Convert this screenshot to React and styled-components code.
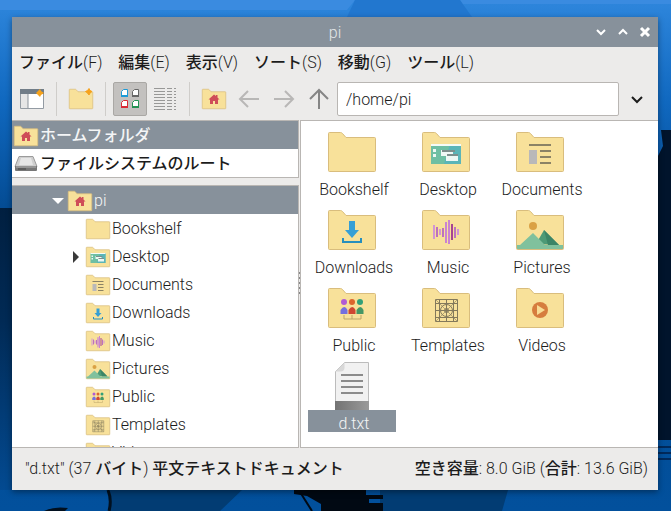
import React from "react";
import styled, { createGlobalStyle } from "styled-components";

const GlobalStyle = createGlobalStyle`
  * {
    box-sizing: border-box;
  }
  body {
    margin: 0;
    font-family: Roboto, "Noto Sans CJK JP", sans-serif;
    font-size: 16px;
    font-weight: 300;
    line-height: 20px;
    color: #1c1c1c;
  }
  button, input {
    font: inherit;
    color: inherit;
  }
`;

const Desktop = styled.div`
  position: relative;
  height: 100vh;
  padding: 17px 13px 21px 12px;
  display: flex;
  overflow: hidden;
  background-color: #034a91;
`;

const Wallpaper = styled.svg`
  position: absolute;
  inset: 0;
  width: 100%;
  height: 100%;
`;

const Window = styled.main`
  position: relative;
  flex: 1;
  min-width: 0;
  display: flex;
  flex-direction: column;
  background-color: #ecebea;
  box-shadow: 0 2px 6px rgba(0, 0, 0, 0.4);
`;

const TitleBar = styled.header`
  position: relative;
  height: 30px;
  flex-shrink: 0;
  display: flex;
  align-items: center;
  justify-content: flex-end;
  padding-right: 2px;
  color: white;
  background-color: #87919b;
`;

const Title = styled.h1`
  position: absolute;
  inset: 0;
  margin: 0;
  font-size: 16px;
  font-weight: 300;
  line-height: 32px;
  text-align: center;
  color: #e3e6e8;
`;

const TitleButton = styled.button`
  position: relative;
  width: 22px;
  height: 22px;
  padding: 0;
  border: 0;
  display: grid;
  place-items: center;
  color: white;
  background: none;
`;

const MenuBar = styled.nav`
  height: 32px;
  flex-shrink: 0;
  display: flex;
  align-items: center;
  gap: 16px;
  padding: 0 7px;
`;

const MenuItem = styled.button`
  padding: 0;
  border: 0;
  background: none;
  white-space: nowrap;
`;

const Ja = styled.span`
  font-weight: 500;
`;

const ToolBar = styled.div`
  height: 41px;
  flex-shrink: 0;
  display: flex;
  align-items: center;
  gap: 1px;
  padding: 0 4px 1px 3px;
`;

const ToolButton = styled.button`
  width: 34px;
  height: 34px;
  flex-shrink: 0;
  padding: 0;
  border: 1px solid ${(props) => (props.$active ? "#aaa8a5" : "transparent")};
  border-radius: 2px;
  display: grid;
  place-items: center;
  background-color: ${(props) => (props.$active ? "#c3c1bf" : "transparent")};
`;

const Separator = styled.div`
  width: 1px;
  height: 34px;
  margin: 0 6px;
  background-color: #cfcdca;
`;

const PathInput = styled.input`
  flex: 1;
  min-width: 0;
  height: 34px;
  padding: 0 8px;
  border: 1px solid #b9b6b3;
  border-radius: 2px;
  background-color: white;
`;

const Panes = styled.div`
  flex: 1;
  min-height: 0;
  display: flex;
`;

const SidePane = styled.aside`
  width: 287px;
  flex-shrink: 0;
  display: flex;
  flex-direction: column;
  gap: 7px;
`;

const List = styled.ul`
  flex: ${(props) => (props.$fill ? "1" : "none")};
  min-height: 0;
  margin: 0;
  padding: 0;
  list-style: none;
  overflow: hidden;
  border: 1px solid #b9b6b3;
  border-left: 0;
  background-color: white;
`;

const Row = styled.li`
  height: 28px;
  display: flex;
  align-items: center;
  gap: 2px;
  padding: 2px 0 0 ${(props) => props.$indent}px;
  color: ${(props) => (props.$selected ? "#f4f5f6" : "inherit")};
  background-color: ${(props) => (props.$selected ? "#87919b" : "white")};
`;

const Arrow = styled.svg`
  width: 16px;
  height: 16px;
`;

const Splitter = styled.div`
  width: 1px;
  display: flex;
  background: repeating-linear-gradient(#888 0 2px, #ecebea 2px 5px) center / 1px 24px no-repeat;
`;

const FileGrid = styled.ul`
  flex: 1;
  min-width: 0;
  margin: 0;
  padding: 7px;
  list-style: none;
  display: grid;
  grid-template-columns: repeat(auto-fill, 88px);
  grid-auto-rows: 70px;
  gap: 8px 6px;
  border: 1px solid #b9b6b3;
  border-right: 0;
  background-color: white;
`;

const File = styled.li`
  display: flex;
  flex-direction: column;
  align-items: center;
`;

const FileName = styled.span`
  align-self: stretch;
  height: 22px;
  padding: 4px 0 0 4px;
  text-align: center;
  color: ${(props) => (props.$selected ? "#f4f5f6" : "inherit")};
  background-color: ${(props) => (props.$selected ? "#87919b" : "transparent")};
`;

const StatusBar = styled.footer`
  height: 42px;
  flex-shrink: 0;
  display: flex;
  align-items: center;
  justify-content: space-between;
  padding: 0 10px 0 13px;
  white-space: nowrap;
`;

const emblems = {
  home: (
    <path d="M24 15l-11 10h3v9h6v-6h4v6h6v-9h3l-4-4v-5h-3v2z" fill="#cf4d58" />
  ),
  desktop: (
    <>
      <path d="M9 16h30v20H9z" fill="#6fbfa3" />
      <path d="M28 16h11v20H22z" fill="#5bb5b8" />
      <path d="M9 16h30v2H9z" fill="#f5fbf8" />
      <path d="M11 21h3v3h-3zM11 26h3v3h-3zM19 22h12v6H19zM24 26h12v7H24z" fill="#eef8f4" />
      <path d="M20 22h13v2H20zM25 26h11v2H25z" fill="#7d8f8c" />
    </>
  ),
  documents: (
    <>
      <path d="M13 17h22M24 23h11M24 29h11M24 35h11" stroke="#8b8265" strokeWidth="2" />
      <path d="M13 22h8v14h-8z" fill="#b9b8b9" />
    </>
  ),
  downloads: (
    <>
      <path d="M21 15h6v9h4l-7 8-7-8h4z" fill="#369fd5" />
      <path d="M15 32v4h18v-4" fill="none" stroke="#278fbd" strokeWidth="2" />
    </>
  ),
  music: (
    <>
      <path
        d="M12 19v14M18 23v6M24 19v14M36 23v6"
        stroke="#d296d4"
        strokeWidth="2"
      />
      <path d="M15 21v10M21 22v9M33 21v11" stroke="#bd72bd" strokeWidth="2" />
      <path d="M24 16v21M27 14v24" stroke="#c983d2" strokeWidth="2" />
      <path d="M30 18v16" stroke="#a74591" strokeWidth="2" />
    </>
  ),
  pictures: (
    <>
      <circle cx="17" cy="20" r="4" fill="#daa144" />
      <path d="M20 38l8-14 15 15z" fill="#4d9a76" />
      <path d="M28 24l15 15H32z" fill="#3c8566" />
      <path d="M1 39h3l13-12 12 12h18v4H1z" fill="#80c19d" />
    </>
  ),
  public: (
    <>
      <path d="M16 31v4h17v-4M24 31v4" fill="none" stroke="#bda568" />
      <circle cx="16" cy="18" r="3" fill="#b05bd4" />
      <circle cx="24" cy="18" r="3" fill="#dc652d" />
      <circle cx="32" cy="18" r="3" fill="#32a078" />
      <path d="M12.500 30v-4q4-6 7 0v4z" fill="#746fdf" />
      <path d="M20.500 30v-4q4-6 7 0v4z" fill="#cf4631" />
      <path d="M28.500 30v-4q4-6 7 0v4z" fill="#459765" />
    </>
  ),
  templates: (
    <g fill="none" stroke="#83795b">
      <path d="M13.500 15.500h22v22h-22zM17.500 15.500v22M24.500 15.500v22M31.500 15.500v22M13.500 19.500h22M13.500 26.500h22M13.500 33.500h22" />
      <path d="M14 16l21 21M35 16L14 37" strokeWidth=".6" />
      <circle cx="24.500" cy="26.500" r="6" />
      <circle cx="24.500" cy="26.500" r="2" />
    </g>
  ),
  videos: (
    <>
      <circle cx="24" cy="26" r="8" fill="#d67d3e" />
      <path d="M21 21l8 5-8 5z" fill="#f8dc94" />
    </>
  ),
  star: (
    <path d="M40 3l2 4 4 2-4 3-2 4-3-4-4-3 4-2z" fill="#f6a21b" stroke="#f6a21b" strokeWidth="2" />
  ),
};

const FolderIcon = ({ kind, size = 48 }) => (
  <svg width={size} height={size} viewBox="0 0 48 48" overflow="visible" aria-hidden="true">
    <path
      d="M.5 5.500q0-1 1-1h11q1 0 2 1l3.500 4H46.500q1 0 1 1v32q0 1-1 1h-45q-1 0-1-1z"
      fill="#f8e19a"
      stroke="#d9bd7d"
      strokeWidth={size < 30 ? 1.5 : 1}
    />
    {emblems[kind]}
  </svg>
);

const TextFileIcon = () => (
  <svg width="48" height="48" viewBox="0 0 48 48" aria-hidden="true">
    <defs>
      <linearGradient id="fileBand">
        <stop offset="0" stopColor="#737373" />
        <stop offset="1" stopColor="#9a9a9a" />
      </linearGradient>
    </defs>
    <path d="M7.500 9.500l9-9h24V48h-33z" fill="#f1f1f1" stroke="#bcbcbc" />
    <path d="M7.500 9.500l9-9v5q0 4-4 4z" fill="#d8d8d8" />
    <path d="M7 39h34v9H7z" fill="url(#fileBand)" />
    <path d="M13 13h22M13 19h22M13 25h22M13 31h22" stroke="#8b8b8b" strokeWidth="2" />
  </svg>
);

const DriveIcon = () => (
  <svg width="24" height="24" viewBox="0 0 24 24" aria-hidden="true">
    <path d="M5 4.500h14l4 10H1z" fill="#cfcfcf" stroke="#9b9b9b" />
    <path d="M7 6h10l2 7H5z" fill="#e6e6e6" />
    <path d="M1 14h22v4q0 1-1 1H2q-1 0-1-1z" fill="#777" />
    <path d="M2 15h20" stroke="#b5b5b5" />
    <path d="M4 17h8" stroke="#444" />
  </svg>
);

const NewWindowIcon = () => (
  <svg width="24" height="24" viewBox="0 0 24 24" aria-hidden="true">
    <path d="M.5 2.500h23v19H.5z" fill="#fff" stroke="#939ba3" />
    <path d="M1 7h7v14H1z" fill="#e6e6e6" />
    <path d="M8 7v14" stroke="#8b939b" />
    <path d="M0 2h24v5H0z" fill="#717d88" />
    <path d="M20 2l1 2 3 2-3 2-1 2-2-2-2-2 2-2z" fill="#f6a21b" />
  </svg>
);

const IconViewIcon = () => (
  <svg width="22" height="24" viewBox="0 0 22 24" aria-hidden="true">
    {[
      [2, 2, "#1d9ad6"],
      [13, 2, "#686868"],
      [2, 13, "#da2b36"],
      [13, 13, "#239253"],
    ].map(([x, y, color]) => (
      <g key={color} transform={`translate(${x} ${y})`}>
        <path d="M2.500.5h4v7h-6v-5z" fill="#fff" stroke={color} />
        <path d="M0 6h7v2H0z" fill={color} />
      </g>
    ))}
  </svg>
);

const ListViewIcon = () => (
  <svg width="24" height="24" viewBox="0 0 24 24" aria-hidden="true">
    {[1, 4, 7, 10, 13, 16, 19, 22].map((y) => (
      <path key={y} d={`M1 ${y}.5h11M14 ${y}.5h5M21 ${y}.5h2`} stroke="#989897" />
    ))}
  </svg>
);

const ArrowIcon = ({ d, color }) => (
  <svg width="22" height="22" viewBox="0 0 22 22" fill="none" aria-hidden="true">
    <path d={d} stroke={color} strokeWidth="2" />
  </svg>
);

const Chevron = ({ d, width = 2 }) => (
  <svg width="12" height="12" viewBox="0 0 12 12" fill="none" aria-hidden="true">
    <path d={d} stroke="currentColor" strokeWidth={width} />
  </svg>
);

const menus = [
  ["ファイル", "F"],
  ["編集", "E"],
  ["表示", "V"],
  ["ソート", "S"],
  ["移動", "G"],
  ["ツール", "L"],
];

const folders = [
  "Bookshelf",
  "Desktop",
  "Documents",
  "Downloads",
  "Music",
  "Pictures",
  "Public",
  "Templates",
  "Videos",
];

const App = () => (
  <>
    <GlobalStyle />
    <Desktop>
      <Wallpaper viewBox="0 0 671 511" preserveAspectRatio="none" aria-hidden="true">
        <defs>
          <linearGradient id="sky" x1="0" y1="0" x2="0" y2="1">
            <stop offset="0" stopColor="#2e86dc" />
            <stop offset=".2" stopColor="#1068bf" />
            <stop offset=".42" stopColor="#034a91" />
            <stop offset="1" stopColor="#02509c" />
          </linearGradient>
          <linearGradient id="shade" x1="0" y1="0" x2="0" y2="1">
            <stop offset="0" stopColor="#011f40" />
            <stop offset=".4" stopColor="#012a55" />
            <stop offset="1" stopColor="#034a91" />
          </linearGradient>
        </defs>
        <path d="M0 0h671v511H0z" fill="url(#sky)" />
        <path d="M0 0h355l-8 10H0zM460 0h211v4H462z" fill="#3a8be0" />
        <path d="M355 0h105l12 17H347z" fill="#2277cf" />
        {/* trees on both sides */}
        <path d="M0 208h12v282H0z" fill="url(#shade)" />
        <path d="M661 130h10v310h-13V156l5-10z" fill="#01142c" />
        <path d="M658 447h13M658 453h13M658 459h13" stroke="#01295a" strokeWidth="2" />
        {/* water under the window */}
        <path d="M110 490h132l-22 21H110zM380 490h128l-6 21H380z" fill="#023c73" />
        <path d="M108 490q4 10 1 21" fill="none" stroke="#01101f" strokeWidth="3" />
        <path d="M44 511q10-5 24-3l-3 3z" fill="#01101f" />
        <path d="M294 490h72v5h17v4h-14v4h14v8h-62v-7l-14-8-13-2z" fill="#010913" />
        <path d="M300 492l12 19" stroke="#010913" strokeWidth="2" />
      </Wallpaper>
      <Window>
        <TitleBar>
          <Title>pi</Title>
          <TitleButton aria-label="最小化">
            <Chevron d="M2 4l4 4 4-4" />
          </TitleButton>
          <TitleButton aria-label="最大化">
            <Chevron d="M2 8l4-4 4 4" />
          </TitleButton>
          <TitleButton aria-label="閉じる">
            <Chevron d="M2 2l8 8M10 2l-8 8" width={3} />
          </TitleButton>
        </TitleBar>
        <MenuBar>
          {menus.map(([name, key]) => (
            <MenuItem key={key}>
              <Ja>{name}</Ja>({key})
            </MenuItem>
          ))}
        </MenuBar>
        <ToolBar>
          <ToolButton aria-label="新しいウィンドウ">
            <NewWindowIcon />
          </ToolButton>
          <Separator />
          <ToolButton aria-label="新しいフォルダ">
            <FolderIcon kind="star" size={24} />
          </ToolButton>
          <Separator />
          <ToolButton $active aria-pressed="true" aria-label="アイコン表示">
            <IconViewIcon />
          </ToolButton>
          <ToolButton aria-label="リスト表示">
            <ListViewIcon />
          </ToolButton>
          <Separator />
          <ToolButton aria-label="ホーム">
            <FolderIcon kind="home" size={24} />
          </ToolButton>
          <ToolButton aria-label="戻る">
            <ArrowIcon d="M21 11H3M10 3l-8 8 8 8" color="#b8b7b6" />
          </ToolButton>
          <ToolButton aria-label="進む">
            <ArrowIcon d="M1 11h18M12 3l8 8-8 8" color="#b8b7b6" />
          </ToolButton>
          <ToolButton aria-label="上へ">
            <ArrowIcon d="M11 21V3M2 11l9-9 9 9" color="#858585" />
          </ToolButton>
          <PathInput aria-label="パス" defaultValue="/home/pi" />
          <ToolButton aria-label="履歴">
            <Chevron d="M1 4l5 5 5-5" />
          </ToolButton>
        </ToolBar>
        <Panes>
          <SidePane>
            <List>
              <Row $selected $indent={2}>
                <FolderIcon kind="home" size={24} />
                <Ja>ホームフォルダ</Ja>
              </Row>
              <Row $indent={2}>
                <DriveIcon />
                <Ja>ファイルシステムのルート</Ja>
              </Row>
            </List>
            <List $fill>
              <Row $selected $indent={38}>
                <Arrow viewBox="0 0 16 16">
                  <path d="M2 5h12l-6 6z" fill="#fff" />
                </Arrow>
                <FolderIcon kind="home" size={24} />
                pi
              </Row>
              {folders.map((name) => (
                <Row key={name} $indent={56}>
                  <Arrow viewBox="0 0 16 16">
                    {name === "Desktop" && <path d="M5 2l6 6-6 6z" fill="#3a3a3a" />}
                  </Arrow>
                  <FolderIcon kind={name.toLowerCase()} size={24} />
                  {name}
                </Row>
              ))}
            </List>
          </SidePane>
          <Splitter />
          <FileGrid>
            {folders.map((name) => (
              <File key={name}>
                <FolderIcon kind={name.toLowerCase()} />
                <FileName>{name}</FileName>
              </File>
            ))}
            <File>
              <TextFileIcon />
              <FileName $selected>d.txt</FileName>
            </File>
          </FileGrid>
        </Panes>
        <StatusBar>
          <span>
            "d.txt" (37 <Ja>バイト</Ja>) <Ja>平文テキストドキュメント</Ja>
          </span>
          <span>
            <Ja>空き容量</Ja>: 8.0 GiB (<Ja>合計</Ja>: 13.6 GiB)
          </span>
        </StatusBar>
      </Window>
    </Desktop>
  </>
);

export default App;
